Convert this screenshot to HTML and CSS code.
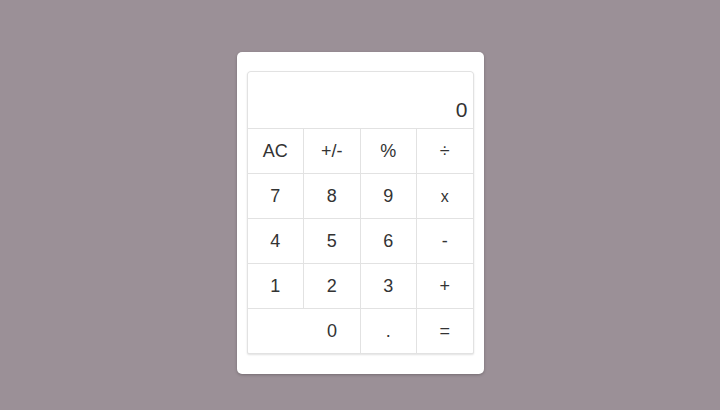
FILE: index.html
```html
<!DOCTYPE html>
<html>
<head>
<meta charset="utf-8">
<link rel="stylesheet" href="styles.css">
</head>
<body>
<div class="card">
  <div class="calc">
    <div class="display">0</div>
    <div class="key">AC</div>
    <div class="key">+/-</div>
    <div class="key">%</div>
    <div class="key">÷</div>
    <div class="key">7</div>
    <div class="key">8</div>
    <div class="key">9</div>
    <div class="key op-x">x</div>
    <div class="key">4</div>
    <div class="key">5</div>
    <div class="key">6</div>
    <div class="key">-</div>
    <div class="key">1</div>
    <div class="key">2</div>
    <div class="key">3</div>
    <div class="key">+</div>
    <div class="key zero">0</div>
    <div class="key">.</div>
    <div class="key">=</div>
  </div>
</div>
</body>
</html>
```
FILE: styles.css
```css
html, body {
  margin: 0;
  padding: 0;
}
body {
  background: #9b9097;
  width: 720px;
  height: 410px;
  display: flex;
  justify-content: center;
  align-items: flex-start;
  padding-top: 52px;
  box-sizing: border-box;
  font-family: "Liberation Sans", Arial, sans-serif;
  color: #333;
}
.card {
  background: #fff;
  border-radius: 5px;
  padding: 19px 10px 20px;
  box-shadow: 0 1px 3px rgba(0, 0, 0, 0.25);
}
.calc {
  width: 227px;
  box-sizing: border-box;
  display: grid;
  grid-template-columns: repeat(4, 1fr);
  grid-template-rows: 56px repeat(5, 44px);
  gap: 1px;
  background: #e2e2e2;
  border: 1px solid #e2e2e2;
  border-radius: 4px 4px 2px 2px;
  box-shadow: 0 1px 2px rgba(0, 0, 0, 0.12);
  overflow: hidden;
}
.display {
  grid-column: span 4;
  background: #fff;
  display: flex;
  justify-content: flex-end;
  align-items: flex-end;
  padding: 0 5px 6px 0;
  font-size: 21px;
  line-height: 24px;
}
.key {
  background: #fff;
  display: flex;
  justify-content: center;
  align-items: center;
  font-size: 18px;
}
.op-x {
  font-size: 16px;
  padding-top: 2px;
}
.zero {
  grid-column: span 2;
  padding-left: 57px;
}
```
